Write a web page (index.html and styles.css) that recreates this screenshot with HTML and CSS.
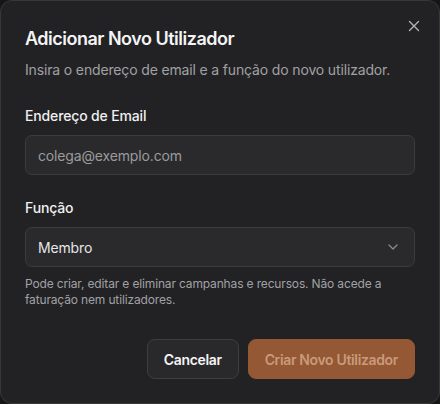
FILE: index.html
```html
<!DOCTYPE html>
<html>
<head>
    <link rel="stylesheet" href="styles.css">
</head>
<body>
    <div class="dialog">
        <button class="close" aria-label="Fechar">
            <svg width="12" height="12" viewBox="0 0 12 12"><path d="M1.5 1.5l9 9M10.5 1.5l-9 9" stroke="currentColor" stroke-width="1.4" stroke-linecap="round"/></svg>
        </button>
        <h2 class="title">Adicionar Novo Utilizador</h2>
        <p class="desc">Insira o endereço de email e a função do novo utilizador.</p>

        <div class="field">
            <label for="email">Endereço de Email</label>
            <input type="email" id="email" placeholder="colega@exemplo.com">
        </div>

        <div class="field role">
            <label for="role">Função</label>
            <div class="select">
                <span>Membro</span>
                <svg width="16" height="16" viewBox="0 0 16 16"><path d="M4 6l4 4 4-4" fill="none" stroke="currentColor" stroke-width="1.3" stroke-linecap="round" stroke-linejoin="round"/></svg>
            </div>
            <p class="hint">Pode criar, editar e eliminar campanhas e recursos. Não acede a faturação nem utilizadores.</p>
        </div>

        <div class="actions">
            <button class="btn secondary">Cancelar</button>
            <button class="btn primary" disabled>Criar Novo Utilizador</button>
        </div>
    </div>
</body>
</html>
```

FILE: styles.css
```css
html, body {
    margin: 0;
    background: #161617;
}
body {
    font-family: Inter, "Noto Sans", sans-serif;
    color: #ececec;
    letter-spacing: -0.15px;
}
.dialog {
    position: relative;
    box-sizing: border-box;
    width: 440px;
    height: 404px;
    padding: 24px;
    background: #222224;
    border: 1px solid #38383a;
    border-radius: 12px;
}
.close {
    position: absolute;
    top: 17px;
    right: 17px;
    width: 16px;
    height: 16px;
    padding: 0;
    display: flex;
    align-items: center;
    justify-content: center;
    background: none;
    border: none;
    color: #b4b4b6;
}
.title {
    margin: 0;
    font-size: 18px;
    line-height: 28px;
    font-weight: 600;
    letter-spacing: -0.5px;
    color: #f4f4f5;
}
.desc {
    margin: 7px 0 0;
    font-size: 14px;
    line-height: 20px;
    color: #a1a1a4;
}
.field {
    margin-top: 26px;
}
.field.role {
    margin-top: 23px;
}
label {
    display: block;
    font-size: 14px;
    line-height: 20px;
    font-weight: 500;
    color: #f0f0f0;
    margin-bottom: 9px;
}
input, .select {
    box-sizing: border-box;
    width: 100%;
    height: 40px;
    padding: 0 12px;
    background: #2a2a2c;
    border: 1px solid #3c3c3f;
    border-radius: 7px;
    font-family: inherit;
    font-size: 14px;
    letter-spacing: inherit;
    color: #e6e6e6;
}
input::placeholder {
    color: #9b9b9e;
}
.select {
    display: flex;
    align-items: center;
    justify-content: space-between;
}
.select svg {
    color: #8a8a8d;
    margin-right: 1px;
}
.hint {
    margin: 9px 0 0;
    font-size: 12px;
    line-height: 16px;
    color: #a1a1a4;
}
.actions {
    display: flex;
    justify-content: flex-end;
    gap: 9px;
    margin-top: 31px;
}
.btn {
    height: 40px;
    padding: 0 16px;
    border-radius: 8px;
    font-family: inherit;
    font-size: 14px;
    font-weight: 600;
    letter-spacing: -0.35px;
}
.secondary {
    background: #29292b;
    border: 1px solid #3e3e41;
    color: #f4f4f5;
}
.primary {
    background: #945834;
    border: 1px solid #945834;
    color: #c99a7b;
}
```
